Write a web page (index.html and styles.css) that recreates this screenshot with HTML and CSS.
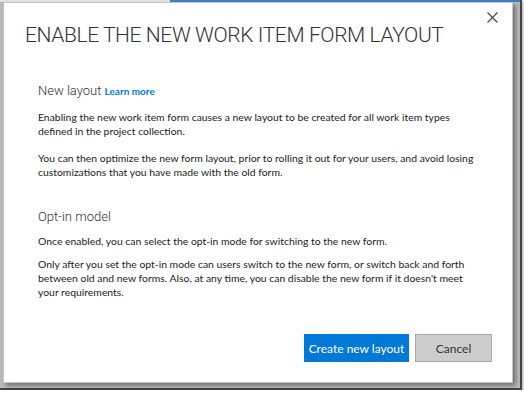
FILE: index.html
```html
<!DOCTYPE html>
<html lang="en">

<head>
  <meta charset="UTF-8">
  <title>Enable the new work item form layout</title>
  <link rel="stylesheet" href="styles.css">
</head>

<body>
<div class="shot">
  <div class="dialog">
    <button class="closeBtn" title="Close">
      <svg width="11" height="11" viewBox="0 0 11 11">
        <path d="M0.5 0.5 L10.5 10.5 M10.5 0.5 L0.5 10.5" stroke="#444" stroke-width="1.1" fill="none"/>
      </svg>
    </button>

    <h1>ENABLE THE NEW WORK ITEM FORM LAYOUT</h1>

    <div class="section first">
      <h2>New layout <a class="learn" href="#">Learn more</a></h2>
      <p>Enabling the new work item form causes a new layout to be created for all work item types defined in the project collection.</p>
      <p>You can then optimize the new form layout, prior to rolling it out for your users, and avoid losing customizations that you have made with the old form.</p>
    </div>

    <div class="section">
      <h2>Opt-in model</h2>
      <p class="tight">Once enabled, you can select the opt-in mode for switching to the new form.</p>
      <p>Only after you set the opt-in mode can users switch to the new form, or switch back and forth between old and new forms. Also, at any time, you can disable the new form if it doesn't meet your requirements.</p>
    </div>

    <div class="buttons">
      <button class="primary">Create new layout</button>
      <button class="secondary">Cancel</button>
    </div>
  </div>
</div>
</body>

</html>
```

FILE: styles.css
```css
html {
  --blue: #0078d7;
  --text: #222;
  --heading: #333;
  --font: 'Lato', 'Open Sans', sans-serif;
  --light: 'Roboto', 'Lato', sans-serif;
}

body {
  margin: 0;
  background: #fff;
  font-family: var(--font);
}

.shot {
  width: 517px;
  height: 386px;
  padding: 2px 0 0 3px;
  background: linear-gradient(90deg, #dfe3e8 0, #dfe3e8 170px, #3d7fc4 170px) top / 100% 2px no-repeat, #b9b9b9;
  border-right: 2px solid #444;
  border-bottom: 2px solid #444;
  box-shadow: 1px 1px 3px rgba(0, 0, 0, 0.35);
}

.dialog {
  position: relative;
  box-sizing: border-box;
  width: 510px;
  height: 381px;
  background: #fff;
  border: 1px solid #c4c4c4;
  box-shadow: 3px 3px 4px rgba(0, 0, 0, 0.35);
  padding: 17px 20px 20px 34px;
  display: flex;
  flex-direction: column;
}

.closeBtn {
  position: absolute;
  top: 8px;
  right: 14px;
  border: 0;
  background: none;
  padding: 0;
  width: 11px;
  height: 11px;
}

h1 {
  margin: 0 0 0 -13px;
  font-family: var(--light);
  font-size: 21px;
  font-weight: 300;
  letter-spacing: -0.4px;
  color: var(--heading);
  line-height: 30px;
  white-space: nowrap;
}

h2 {
  margin: 15px 0 7px 0;
  font-family: var(--light);
  font-size: 13px;
  font-weight: 300;
  color: var(--heading);
  line-height: 20px;
}

.first h2 {
  margin: 31px 0 9px 0;
}

.learn {
  font-family: var(--font);
  color: var(--blue);
  text-decoration: none;
  font-size: 10px;
  font-weight: 700;
}

p {
  margin: 0 0 13px 0;
  font-size: 10.4px;
  line-height: 14px;
  color: var(--text);
  max-width: 436px;
}

p.tight {
  margin-bottom: 9px;
}

.buttons {
  margin-top: auto;
  display: flex;
  justify-content: flex-end;
  gap: 6px;
}

.buttons button {
  height: 28px;
  font-family: var(--font);
  font-size: 12px;
  padding: 0;
  white-space: nowrap;
}

.primary {
  width: 105px;
  background: var(--blue);
  color: #fff;
  border: 1px solid var(--blue);
}

.secondary {
  width: 77px;
  background: #ccc;
  color: #333;
  border: 1px solid #aaa;
}
```
